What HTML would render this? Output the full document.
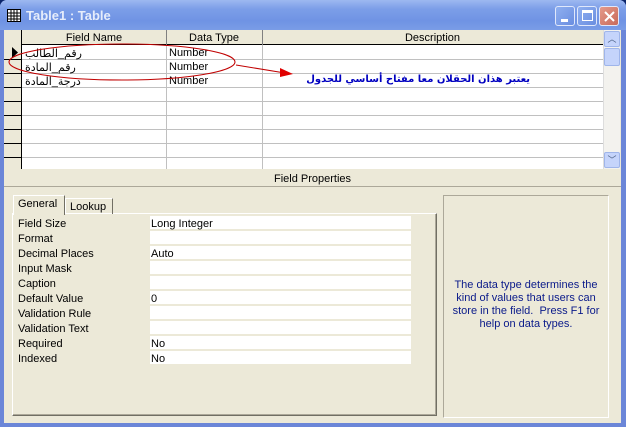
<!DOCTYPE html>
<html><head><meta charset="utf-8"><style>
*{margin:0;padding:0;box-sizing:border-box}
body{width:626px;height:427px;overflow:hidden;background:#0a246a;font-family:Tahoma,"Liberation Sans",sans-serif;font-size:11px;position:relative}
.a{position:absolute}
.t{font-family:"Liberation Sans",sans-serif;font-size:11px;color:#000;white-space:nowrap}
</style></head><body>
<div class="a" style="left:0;top:0;width:626px;height:427px;background:#6b86d8;border-radius:7px 7px 0 0"></div>
<div class="a" style="left:0;top:0;width:626px;height:30px;border-radius:7px 7px 0 0;background:linear-gradient(#9db8f0,#7c9ee8 30%,#6f93e4 70%,#7a9ce6)"></div>
<div class="a" style="left:4px;top:30px;width:617px;height:393px;background:#ece9d8"></div>
<svg class="a" style="left:7px;top:9px" width="14" height="13"><rect x="0.5" y="0.5" width="13" height="12" fill="#fff" stroke="#000"/><path d="M1 4H13M1 7H13M1 10H13M4 1V12M7 1V12M10 1V12" stroke="#000"/></svg>
<div class="a" style="left:26px;top:8px;font-family:'Liberation Sans',sans-serif;font-weight:bold;font-size:13px;color:#e6edfb">Table1 : Table</div>
<div class="a" style="left:555px;top:6px;width:20px;height:20px;border:1px solid #e0e8fb;border-radius:3px;background:linear-gradient(135deg,#8fb0f0,#6a8de0)"><div class="a" style="left:5px;top:12px;width:7px;height:3px;background:#fff"></div></div>
<div class="a" style="left:577px;top:6px;width:20px;height:20px;border:1px solid #e0e8fb;border-radius:3px;background:linear-gradient(135deg,#8fb0f0,#6a8de0)"><div class="a" style="left:4px;top:3px;width:11px;height:11px;border:1px solid #fff;border-top-width:3px"></div></div>
<div class="a" style="left:599px;top:6px;width:20px;height:20px;border:1px solid #e0e8fb;border-radius:3px;background:linear-gradient(135deg,#e59a8a,#c86a5a)"><svg class="a" style="left:3px;top:3px" width="13" height="13"><path d="M2 2L11 11M11 2L2 11" stroke="#fff" stroke-width="2"/></svg></div>
<div class="a" style="left:4px;top:30px;width:599px;height:139px;background:#fff"></div>
<div class="a" style="left:4px;top:30px;width:599px;height:15px;background:#ece9d8;border-bottom:1px solid #000"></div>
<div class="a" style="left:4px;top:30px;width:18px;height:139px;background:#ece9d8;border-right:1px solid #000"></div>
<div class="a" style="left:166px;top:30px;width:1px;height:139px;background:#c0c0c0"></div>
<div class="a" style="left:262px;top:30px;width:1px;height:139px;background:#c0c0c0"></div>
<div class="a" style="left:166px;top:30px;width:1px;height:15px;background:#808080"></div>
<div class="a" style="left:262px;top:30px;width:1px;height:15px;background:#808080"></div>
<div class="a t" style="left:22px;top:32px;width:144px;text-align:center">Field Name</div>
<div class="a t" style="left:166px;top:32px;width:96px;text-align:center">Data Type</div>
<div class="a t" style="left:262px;top:32px;width:341px;text-align:center">Description</div>
<div class="a" style="left:4px;top:59px;width:599px;height:1px;background:#c0c0c0"></div>
<div class="a" style="left:4px;top:73px;width:599px;height:1px;background:#c0c0c0"></div>
<div class="a" style="left:4px;top:87px;width:599px;height:1px;background:#c0c0c0"></div>
<div class="a" style="left:4px;top:101px;width:599px;height:1px;background:#c0c0c0"></div>
<div class="a" style="left:4px;top:115px;width:599px;height:1px;background:#c0c0c0"></div>
<div class="a" style="left:4px;top:129px;width:599px;height:1px;background:#c0c0c0"></div>
<div class="a" style="left:4px;top:143px;width:599px;height:1px;background:#c0c0c0"></div>
<div class="a" style="left:4px;top:157px;width:599px;height:1px;background:#c0c0c0"></div>
<div class="a" style="left:4px;top:59px;width:18px;height:1px;background:#000"></div>
<div class="a" style="left:4px;top:73px;width:18px;height:1px;background:#000"></div>
<div class="a" style="left:4px;top:87px;width:18px;height:1px;background:#000"></div>
<div class="a" style="left:4px;top:101px;width:18px;height:1px;background:#000"></div>
<div class="a" style="left:4px;top:115px;width:18px;height:1px;background:#000"></div>
<div class="a" style="left:4px;top:129px;width:18px;height:1px;background:#000"></div>
<div class="a" style="left:4px;top:143px;width:18px;height:1px;background:#000"></div>
<div class="a" style="left:4px;top:157px;width:18px;height:1px;background:#000"></div>
<svg class="a" style="left:12px;top:47px" width="7" height="11"><path d="M0 0L6 5.5L0 11Z" fill="#000"/></svg>
<div class="a t" style="left:25px;top:47px;font-family:'Liberation Sans','DejaVu Sans',sans-serif">رقم_الطالب</div>
<div class="a t" style="left:25px;top:61px;font-family:'Liberation Sans','DejaVu Sans',sans-serif">رقم_المادة</div>
<div class="a t" style="left:25px;top:75px;font-family:'Liberation Sans','DejaVu Sans',sans-serif">درجة_المادة</div>
<div class="a t" style="left:169px;top:47px">Number</div>
<div class="a t" style="left:169px;top:61px">Number</div>
<div class="a t" style="left:169px;top:75px">Number</div>
<svg class="a" style="left:0;top:35px" width="300" height="60"><ellipse cx="122" cy="27" rx="113" ry="18" fill="none" stroke="#c00000" stroke-width="1"/><path d="M236 30L285 38" stroke="#c00000"/><path d="M280 33L293 39L280 42Z" fill="#e00000"/></svg>
<div class="a" style="left:290px;top:74px;font-family:'DejaVu Sans',sans-serif;font-weight:bold;font-size:10px;color:#0000c0;direction:rtl;width:240px;text-align:right;white-space:nowrap;letter-spacing:-0.3px">يعتبر هذان الحقلان معا مفتاح أساسي للجدول</div>
<div class="a" style="left:603px;top:30px;width:17px;height:139px;background:#f3f2ee;border-left:1px solid #ddd"></div>
<div class="a" style="left:604px;top:31px;width:16px;height:16px;background:#c5d4fb;border:1px solid #9fb5ea;border-radius:2px;text-align:center;font-size:9px;color:#4d6185;line-height:14px">︿</div>
<div class="a" style="left:604px;top:48px;width:16px;height:18px;background:#c5d4fb;border:1px solid #9fb5ea;border-radius:2px"></div>
<div class="a" style="left:604px;top:152px;width:16px;height:16px;background:#c5d4fb;border:1px solid #9fb5ea;border-radius:2px;text-align:center;font-size:9px;color:#4d6185;line-height:14px">﹀</div>
<div class="a" style="left:4px;top:186px;width:617px;height:1px;background:#aca899"></div>
<div class="a t" style="left:4px;top:173px;width:617px;text-align:center">Field Properties</div>
<div class="a" style="left:12px;top:213px;width:425px;height:203px;border:1px solid #fff;border-right-color:#716f64;border-bottom-color:#716f64;box-shadow:inset -1px -1px #aca899"></div>
<div class="a" style="left:65px;top:198px;width:48px;height:16px;border:1px solid #fff;border-right-color:#716f64;border-bottom:none"></div>
<div class="a t" style="left:70px;top:201px">Lookup</div>
<div class="a" style="left:13px;top:195px;width:52px;height:20px;background:#ece9d8;border:1px solid #fff;border-right-color:#716f64;border-bottom:none"></div>
<div class="a t" style="left:18px;top:198px">General</div>
<div class="a" style="left:150px;top:216px;width:261px;height:150px;background:repeating-linear-gradient(#fff 0 13px,#ece9d8 13px 15px)"></div>
<div class="a t" style="left:18px;top:217px;line-height:15px">Field Size<br>Format<br>Decimal Places<br>Input Mask<br>Caption<br>Default Value<br>Validation Rule<br>Validation Text<br>Required<br>Indexed</div>
<div class="a t" style="left:151px;top:217px;line-height:15px">Long Integer<br>&nbsp;<br>Auto<br>&nbsp;<br>&nbsp;<br>0<br>&nbsp;<br>&nbsp;<br>No<br>No</div>
<div class="a" style="left:443px;top:195px;width:166px;height:223px;border:1px solid #aca899;border-right-color:#fff;border-bottom-color:#fff"></div>
<div class="a" style="left:446px;top:279px;width:160px;text-align:center;font-family:'Liberation Sans',sans-serif;font-size:11px;line-height:13px;color:#0a1a8a">The data type determines the kind of values that users can store in the field.&nbsp; Press F1 for help on data types.</div>
</body></html>
